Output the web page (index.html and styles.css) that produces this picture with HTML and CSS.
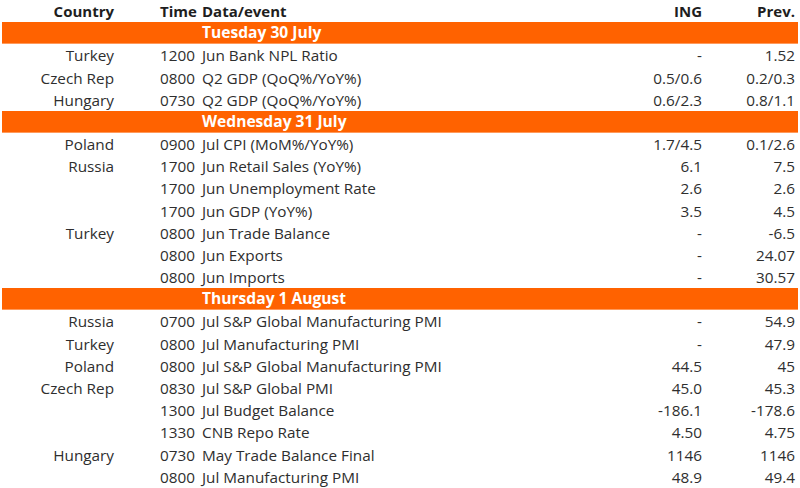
FILE: index.html
```html
<!DOCTYPE html>
<html>
<head>
<meta charset="utf-8">
<link rel="stylesheet" href="styles.css">
</head>
<body>
<div class="table">
  <div class="row head"><span class="c">Country</span><span class="t">Time</span><span class="e">Data/event</span><span class="n">ING</span><span class="p">Prev.</span></div>
  <div class="bar">Tuesday 30 July</div>
  <div class="row"><span class="c">Turkey</span><span class="t">1200</span><span class="e">Jun Bank NPL Ratio</span><span class="n">-</span><span class="p">1.52</span></div>
  <div class="row"><span class="c">Czech Rep</span><span class="t">0800</span><span class="e">Q2 GDP (QoQ%/YoY%)</span><span class="n">0.5/0.6</span><span class="p">0.2/0.3</span></div>
  <div class="row"><span class="c">Hungary</span><span class="t">0730</span><span class="e">Q2 GDP (QoQ%/YoY%)</span><span class="n">0.6/2.3</span><span class="p">0.8/1.1</span></div>
  <div class="bar">Wednesday 31 July</div>
  <div class="row"><span class="c">Poland</span><span class="t">0900</span><span class="e">Jul CPI (MoM%/YoY%)</span><span class="n">1.7/4.5</span><span class="p">0.1/2.6</span></div>
  <div class="row"><span class="c">Russia</span><span class="t">1700</span><span class="e">Jun Retail Sales (YoY%)</span><span class="n">6.1</span><span class="p">7.5</span></div>
  <div class="row"><span class="c"></span><span class="t">1700</span><span class="e">Jun Unemployment Rate</span><span class="n">2.6</span><span class="p">2.6</span></div>
  <div class="row"><span class="c"></span><span class="t">1700</span><span class="e">Jun GDP (YoY%)</span><span class="n">3.5</span><span class="p">4.5</span></div>
  <div class="row"><span class="c">Turkey</span><span class="t">0800</span><span class="e">Jun Trade Balance</span><span class="n">-</span><span class="p">-6.5</span></div>
  <div class="row"><span class="c"></span><span class="t">0800</span><span class="e">Jun Exports</span><span class="n">-</span><span class="p">24.07</span></div>
  <div class="row"><span class="c"></span><span class="t">0800</span><span class="e">Jun Imports</span><span class="n">-</span><span class="p">30.57</span></div>
  <div class="bar">Thursday 1 August</div>
  <div class="row"><span class="c">Russia</span><span class="t">0700</span><span class="e">Jul S&amp;P Global Manufacturing PMI</span><span class="n">-</span><span class="p">54.9</span></div>
  <div class="row"><span class="c">Turkey</span><span class="t">0800</span><span class="e">Jul Manufacturing PMI</span><span class="n">-</span><span class="p">47.9</span></div>
  <div class="row"><span class="c">Poland</span><span class="t">0800</span><span class="e">Jul S&amp;P Global Manufacturing PMI</span><span class="n">44.5</span><span class="p">45</span></div>
  <div class="row"><span class="c">Czech Rep</span><span class="t">0830</span><span class="e">Jul S&amp;P Global PMI</span><span class="n">45.0</span><span class="p">45.3</span></div>
  <div class="row"><span class="c"></span><span class="t">1300</span><span class="e">Jul Budget Balance</span><span class="n">-186.1</span><span class="p">-178.6</span></div>
  <div class="row"><span class="c"></span><span class="t">1330</span><span class="e">CNB Repo Rate</span><span class="n">4.50</span><span class="p">4.75</span></div>
  <div class="row"><span class="c">Hungary</span><span class="t">0730</span><span class="e">May Trade Balance Final</span><span class="n">1146</span><span class="p">1146</span></div>
  <div class="row"><span class="c"></span><span class="t">0800</span><span class="e">Jul Manufacturing PMI</span><span class="n">48.9</span><span class="p">49.4</span></div>
</div>
</body>
</html>
```
FILE: styles.css
```css
html, body {
  margin: 0;
  padding: 0;
  background: #ffffff;
}
body {
  font-family: "Open Sans", "Noto Sans", sans-serif;
  font-size: 15.3px;
  color: #2e2e2e;
  width: 800px;
  height: 488px;
  overflow: hidden;
}
.table {
  display: grid;
  grid-auto-rows: 22.18px;
}
.row {
  display: grid;
  grid-template-columns: 114px 88px 400px 100px 93px;
  align-items: center;
  white-space: nowrap;
  line-height: 22px;
}
.c { text-align: right; }
.t { padding-left: 46px; }
.n { text-align: right; }
.p { text-align: right; }
.head {
  font-weight: 700;
  font-size: 15px;
  color: #1e1e1e;
}
.bar {
  margin: 0 2px;
  background: #ff6200;
  border-bottom: 1px solid #ff9a5c;
  color: #ffffff;
  font-weight: 700;
  font-size: 15.6px;
  padding-left: 200px;
  line-height: 21px;
  white-space: nowrap;
}
```
